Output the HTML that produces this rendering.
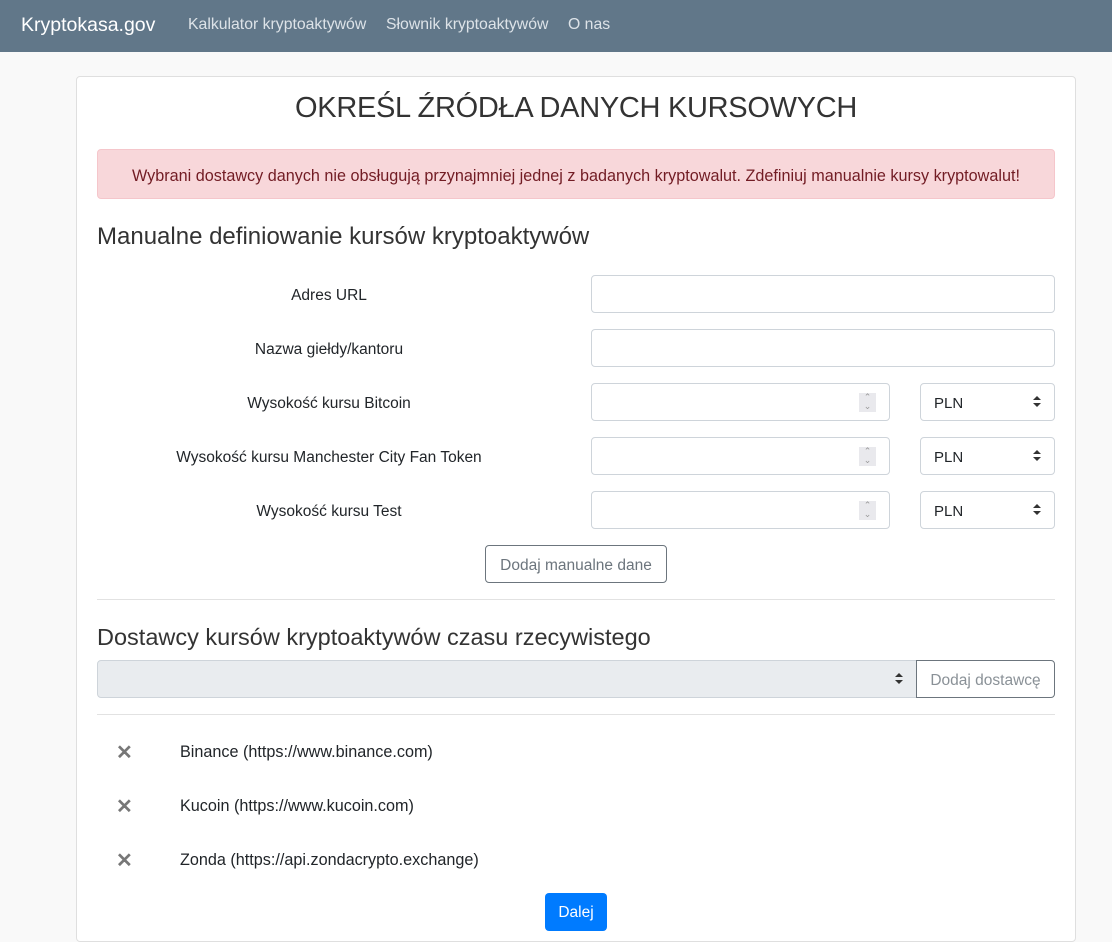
<!DOCTYPE html>
<html><head><meta charset="utf-8"><style>
*{box-sizing:border-box;margin:0;padding:0}
body{width:1112px;height:942px;background:#f9f9f9;font-family:"Liberation Sans",sans-serif;color:#212529;position:relative;overflow:hidden;font-size:15px}
.a{position:absolute}
nav{position:absolute;left:0;top:0;width:1112px;height:52px;background:#617789}
.brand{left:21px;top:14px;color:#fff;font-size:19.5px}
.nl{top:16px;color:#dde3e8;font-size:15.8px}
.card{left:76px;top:76px;width:1000px;height:866px;background:#fff;border:1px solid #dfdfdf;border-radius:4px}
.inp{border:1px solid #ced4da;border-radius:4px;background:#fff;height:38px}
.lbl{width:464px;left:97px;text-align:center;font-size:15.5px}
.sel{left:920px;width:135px;font-size:15px;padding:11px 13px}
.sel:after{content:"";position:absolute;right:13px;top:12px;border:4px solid transparent;border-bottom:4px solid #333;border-top:none}
.sel:before{content:"";position:absolute;right:13px;top:19px;border:4px solid transparent;border-top:4px solid #333;border-bottom:none}
.spin{position:absolute;right:13px;top:9px;width:17px;height:19px;background:#e9e9ed;color:#999;font-size:9px;text-align:center;line-height:9px}
.x{left:116px;font-size:20px;color:#777;font-weight:bold}
.li{left:180px;font-size:16.2px}
hr{position:absolute;left:97px;width:958px;border:0;border-top:1px solid #e2e2e2}
</style></head><body>
<nav><div class="a brand">Kryptokasa.gov</div>
<div class="a nl" style="left:188px">Kalkulator kryptoaktywów</div>
<div class="a nl" style="left:386px">Słownik kryptoaktywów</div>
<div class="a nl" style="left:568px">O nas</div></nav>
<div class="a card"></div>
<div class="a" style="left:76px;width:1000px;top:92px;text-align:center;font-size:29px;color:#333;letter-spacing:-0.3px">OKREŚL ŹRÓDŁA DANYCH KURSOWYCH</div>
<div class="a" style="left:97px;top:149px;width:958px;height:50px;background:#f8d7da;border:1px solid #f5c6cb;border-radius:4px;color:#721c24;text-align:center;font-size:16.2px;line-height:52px">Wybrani dostawcy danych nie obsługują przynajmniej jednej z badanych kryptowalut. Zdefiniuj manualnie kursy kryptowalut!</div>
<div class="a" style="left:97px;top:223px;font-size:24px;color:#333">Manualne definiowanie kursów kryptoaktywów</div>
<div class="a lbl" style="top:287px">Adres URL</div>
<div class="a inp" style="left:591px;top:275px;width:464px"></div>
<div class="a lbl" style="top:341px">Nazwa giełdy/kantoru</div>
<div class="a inp" style="left:591px;top:329px;width:464px"></div>
<div class="a lbl" style="top:395px">Wysokość kursu Bitcoin</div>
<div class="a inp" style="left:591px;top:383px;width:299px"><div class="spin">⌃<br>⌄</div></div>
<div class="a inp sel" style="top:383px">PLN</div>
<div class="a lbl" style="top:449px">Wysokość kursu Manchester City Fan Token</div>
<div class="a inp" style="left:591px;top:437px;width:299px"><div class="spin">⌃<br>⌄</div></div>
<div class="a inp sel" style="top:437px">PLN</div>
<div class="a lbl" style="top:503px">Wysokość kursu Test</div>
<div class="a inp" style="left:591px;top:491px;width:299px"><div class="spin">⌃<br>⌄</div></div>
<div class="a inp sel" style="top:491px">PLN</div>
<div class="a" style="left:485px;top:545px;width:182px;height:38px;border:1px solid #6c757d;border-radius:4px;color:#6c757d;text-align:center;line-height:40px;font-size:15.5px">Dodaj manualne dane</div>
<hr style="top:599px">
<div class="a" style="left:97px;top:624px;font-size:23.5px;color:#333">Dostawcy kursów kryptoaktywów czasu rzecywistego</div>
<div class="a" style="left:97px;top:660px;width:820px;height:38px;background:#e9ecef;border:1px solid #ced4da;border-radius:4px 0 0 4px"><div class="a sel" style="left:auto;right:0;top:0;width:30px;padding:0"></div></div>
<div class="a" style="left:916px;top:660px;width:139px;height:38px;border:1px solid #6c757d;border-radius:0 4px 4px 0;color:#8a9197;text-align:center;line-height:40px;font-size:15.5px">Dodaj dostawcę</div>
<hr style="top:714px">
<div class="a x" style="top:740px">✕</div><div class="a li" style="top:743px">Binance (https://www.binance.com)</div>
<div class="a x" style="top:794px">✕</div><div class="a li" style="top:797px">Kucoin (https://www.kucoin.com)</div>
<div class="a x" style="top:848px">✕</div><div class="a li" style="top:851px">Zonda (https://api.zondacrypto.exchange)</div>
<div class="a" style="left:545px;top:893px;width:62px;height:38px;background:#007bff;border-radius:4px;color:#fff;text-align:center;line-height:40px;font-size:15.5px">Dalej</div>
</body></html>
